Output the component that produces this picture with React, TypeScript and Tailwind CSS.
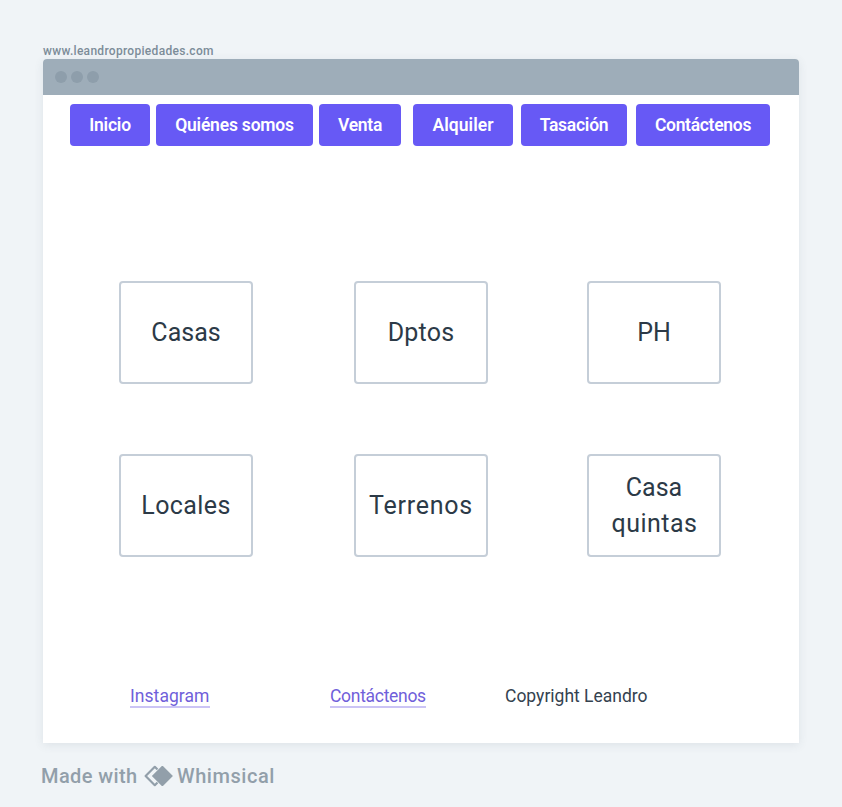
import React from "react";

type NavItem = { label: string; box: string; text: string };

const navItems: NavItem[] = [
  { label: "Inicio", box: "w-[80px]", text: "tracking-[-0.2px]" },
  { label: "Quiénes somos", box: "ml-[6px] w-[157px]", text: "tracking-[-0.2px]" },
  { label: "Venta", box: "ml-[6px] w-[82px]", text: "tracking-[-0.3px]" },
  { label: "Alquiler", box: "ml-[12px] w-[100px]", text: "tracking-[0.05px]" },
  { label: "Tasación", box: "ml-[8px] w-[106px]", text: "tracking-[-0.25px]" },
  { label: "Contáctenos", box: "ml-[9px] w-[134px]", text: "tracking-[-0.3px]" },
];

const categories: { lines: { label: string; text: string }[] }[] = [
  { lines: [{ label: "Casas", text: "tracking-[0px]" }] },
  { lines: [{ label: "Dptos", text: "tracking-[0.2px]" }] },
  { lines: [{ label: "PH", text: "tracking-[0px]" }] },
  { lines: [{ label: "Locales", text: "tracking-[0.4px]" }] },
  { lines: [{ label: "Terrenos", text: "tracking-[0.75px]" }] },
  {
    lines: [
      { label: "Casa", text: "tracking-[0px]" },
      { label: "quintas", text: "pl-px tracking-[0.5px]" },
    ],
  },
];

function BrowserBar() {
  return (
    <div className="flex h-[36px] items-center gap-1 rounded-t-[4px] bg-[#9eadb9] pl-3">
      <span className="size-3 rounded-full bg-[#8e9eab]" />
      <span className="size-3 rounded-full bg-[#8e9eab]" />
      <span className="size-3 rounded-full bg-[#8e9eab]" />
    </div>
  );
}

function WhimsicalMark() {
  return (
    <svg width="30" height="22" viewBox="0 0 30 22" className="ml-[7px] shrink-0" aria-hidden="true">
      <path d="M10.8 1.8 L1.6 11 L10.8 20.2 L20 11 Z" fill="none" stroke="#929faa" strokeWidth="2.2" strokeLinejoin="round" />
      <path
        d="M18.4 1 L8.4 11 L18.4 21 L28.4 11 Z"
        fill="#929faa"
        stroke="#f0f4f7"
        strokeWidth="2"
        strokeLinejoin="round"
        paintOrder="stroke"
      />
      <path d="M18.4 1 L8.4 11 L18.4 21 L28.4 11 Z" fill="#929faa" stroke="#929faa" strokeWidth="0.8" strokeLinejoin="round" />
    </svg>
  );
}

export default function App() {
  return (
    <div className="h-[807px] w-[842px] overflow-hidden bg-[#f0f4f7] pl-[43px] pt-[43px] font-['Roboto','Liberation_Sans',sans-serif]">
      <div className="h-[16px] whitespace-nowrap text-[12px] font-medium leading-[16px] tracking-[0.3px] text-[#7c8c99]">
        www.leandropropiedades.com
      </div>
      <main className="h-[684px] w-[756px] rounded-t-[4px] bg-white shadow-[0_2px_10px_rgba(60,80,95,0.10)]">
        <BrowserBar />
        <nav className="flex pl-[27px] pt-[9px]">
          {navItems.map((item) => (
            <button
              key={item.label}
              className={`flex h-[42px] items-center justify-center whitespace-nowrap rounded-[4px] bg-[#6759f5] text-[17.5px] font-semibold leading-[24px] text-white ${item.box} ${item.text}`}
            >
              {item.label}
            </button>
          ))}
        </nav>
        <section className="ml-[76px] mt-[135px] grid grid-cols-[235px_233px_134px] gap-y-[70px]">
          {categories.map((item) => (
            <div
              key={item.lines[0].label}
              className="flex h-[103px] w-[134px] flex-col items-center justify-center rounded-[4px] border-2 border-[#c5ced8] text-center text-[25px] leading-[36px] text-[#2c3a47]"
            >
              {item.lines.map((line) => (
                <span key={line.label} className={line.text}>
                  {line.label}
                </span>
              ))}
            </div>
          ))}
        </section>
        <footer className="mt-[128px] flex whitespace-nowrap text-[17.5px] leading-[22px]">
          <a className="ml-[87px] h-[23px] w-[80px] border-b-2 border-[#cbc4f5] tracking-[0.05px] text-[#7060da]">Instagram</a>
          <a className="ml-[120px] h-[23px] w-[96px] border-b-2 border-[#cbc4f5] tracking-[-0.3px] text-[#7060da]">Contáctenos</a>
          <span className="ml-[79px] tracking-[0px] text-[#34424f]">Copyright Leandro</span>
        </footer>
      </main>
      <div className="-ml-[3px] mt-[21px] flex h-[24px] items-center whitespace-nowrap text-[20px] font-medium leading-[24px] text-[#929faa]">
        <span className="w-[97px] pl-px tracking-[0.4px]">Made with</span>
        <WhimsicalMark />
        <span className="ml-[3px] tracking-[0.55px]">Whimsical</span>
      </div>
    </div>
  );
}
